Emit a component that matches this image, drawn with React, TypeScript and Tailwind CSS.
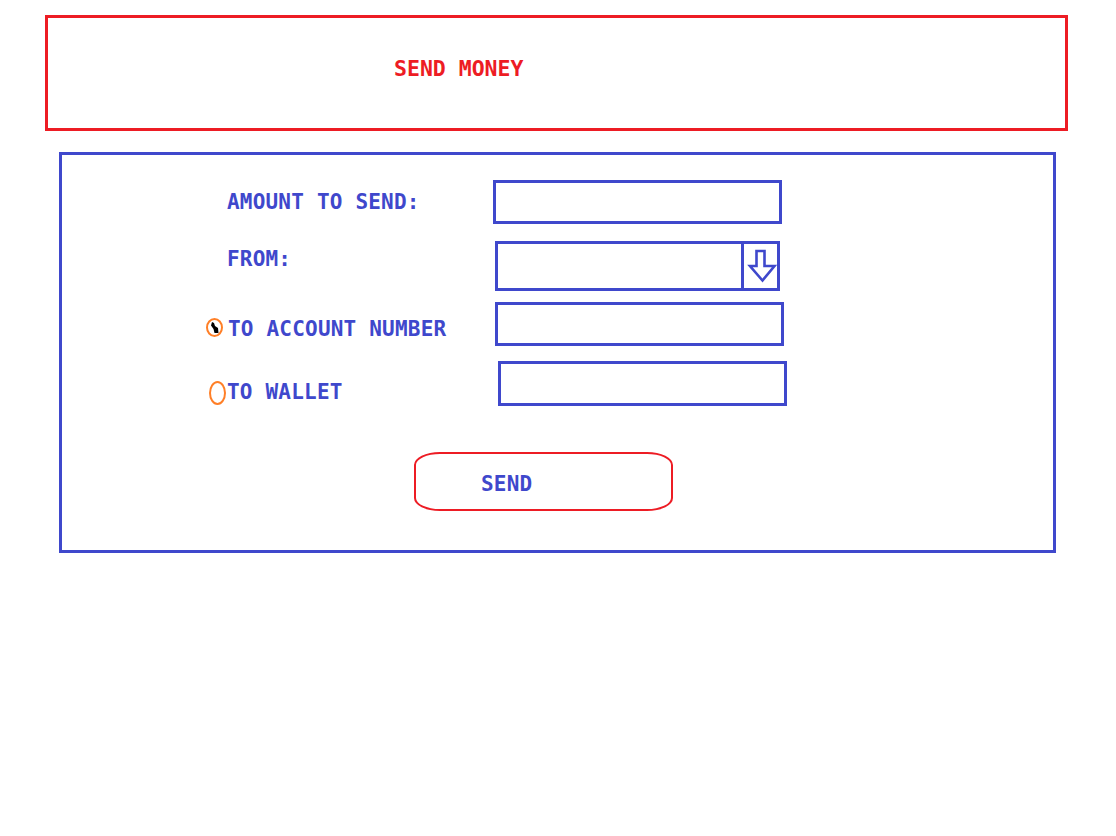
import React from "react";

const F = { fontFamily: '"DejaVu Sans Mono", "Liberation Mono", monospace' };

function Cursor() {
  return (
    <svg width="9" height="12" viewBox="0 0 9 12" className="absolute left-[3px] top-[2px]">
      <path d="M1 0 L3 1 L4 4 L7 6 L7.5 11 L3.5 11 L2.5 7 L0 3.5 Z" fill="#000" />
    </svg>
  );
}

export default function App() {
  return (
    <div className="w-[1116px] h-[836px] bg-white relative" style={F}>
      <div className="pt-[15px] pl-[45px]">
        <div className="w-[1023px] h-[116px] border-[3px] border-[#ed1c24] pl-[346px] pt-[40px]">
          <div className="text-[21.5px] leading-none font-bold text-[#ed1c24]">SEND MONEY</div>
        </div>
      </div>
      <div className="pt-[21px] pl-[59px]">
        <div className="w-[997px] h-[401px] border-[3px] border-[#3f48cc] pt-[25px] text-[#3f48cc] text-[21px] leading-none font-bold">
          {/* Row 1 */}
          <div className="flex h-[44px]">
            <div className="w-[431px] pl-[165px] pt-[12px] tracking-[0.2px]">AMOUNT TO SEND:</div>
            <div className="w-[289px] h-[44px] border-[3px] border-[#3f48cc]" />
          </div>
          {/* Row 2 */}
          <div className="flex h-[50px] mt-[17px]">
            <div className="w-[433px] pl-[165px] pt-[8px] tracking-[0.2px]">FROM:</div>
            <div className="w-[285px] h-[50px] border-[3px] border-[#3f48cc] flex">
              <div className="flex-1 border-r-[3px] border-[#3f48cc]" />
              <div className="w-[33px] relative">
                <svg width="33" height="44" viewBox="0 0 33 44" className="absolute left-0 top-0">
                  <path
                    d="M12.5 7 L20.5 7 L20.5 22 L30.5 22 L18.5 36.5 L6 22 L12.5 22 Z"
                    fill="none"
                    stroke="#3f48cc"
                    strokeWidth="2.6"
                    strokeLinejoin="miter"
                  />
                </svg>
              </div>
            </div>
          </div>
          {/* Row 3 */}
          <div className="flex h-[44px] mt-[11px]">
            <div className="w-[433px] pl-[144px] flex items-start">
              <div className="relative mt-[16px] w-[17px] h-[19px] rounded-[50%] border-[2.5px] border-[#ff7f27]">
                <Cursor />
              </div>
              <div className="ml-[5px] pt-[17px] tracking-[0.2px]">TO ACCOUNT NUMBER</div>
            </div>
            <div className="w-[289px] h-[44px] border-[3px] border-[#3f48cc]" />
          </div>
          {/* Row 4 */}
          <div className="flex h-[45px] mt-[15px]">
            <div className="w-[436px] pl-[147px] flex items-start">
              <div className="mt-[20px] w-[17px] h-[24px] rounded-[50%] border-[2.5px] border-[#ff7f27]" />
              <div className="ml-[1px] pt-[21px] tracking-[0.2px]">TO WALLET</div>
            </div>
            <div className="w-[289px] h-[45px] border-[3px] border-[#3f48cc]" />
          </div>
          {/* Button */}
          <div className="mt-[46px] pl-[352px]">
            <div className="w-[259px] h-[59px] border-[2.5px] border-[#ed1c24] rounded-[26px/13px] pl-[65px] pt-[20px] tracking-[0.2px]">
              SEND
            </div>
          </div>
        </div>
      </div>
    </div>
  );
}
